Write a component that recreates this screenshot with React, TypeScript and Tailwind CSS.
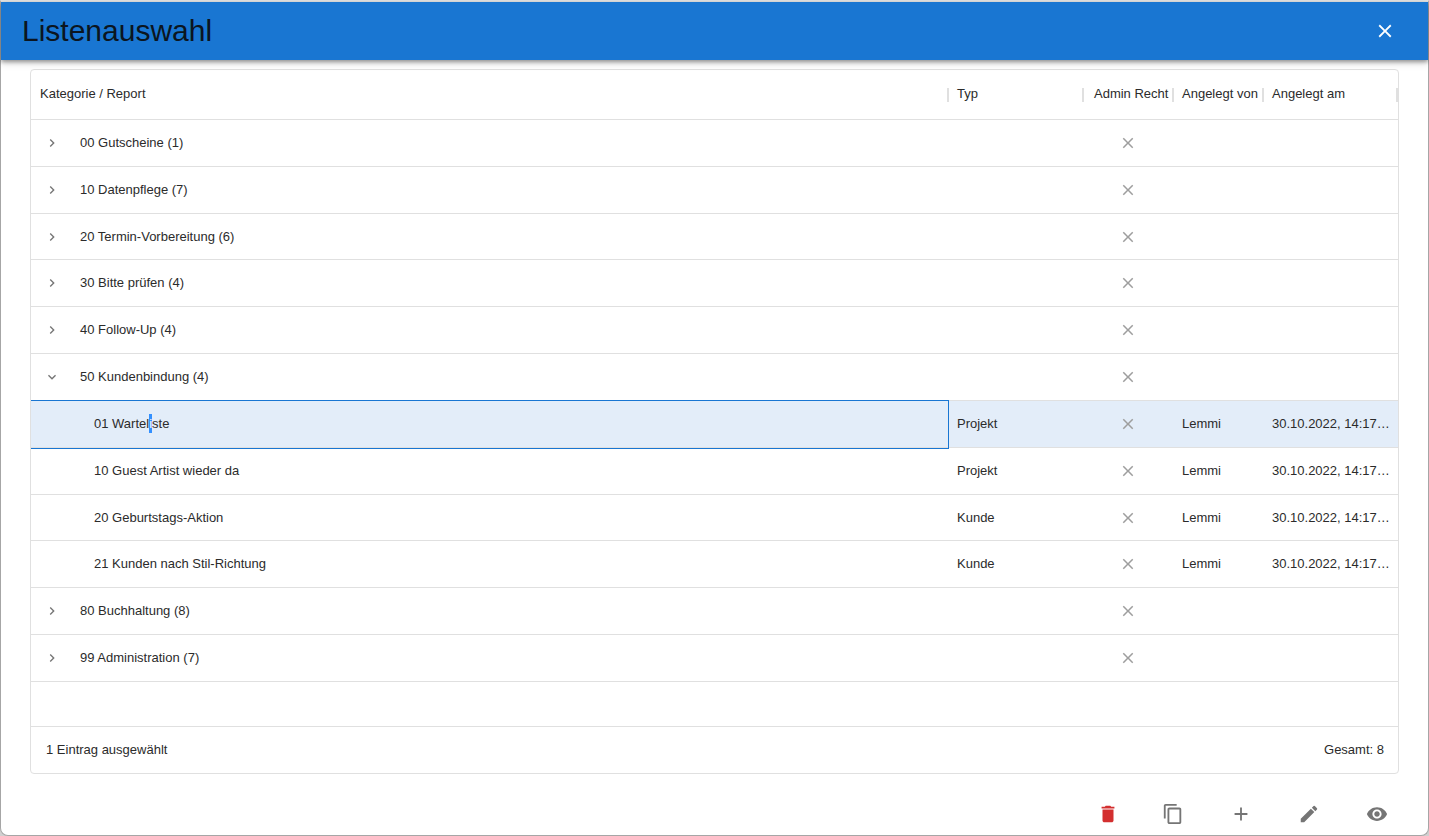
import { ReactNode } from "react";

type Row = { name: string; kind: "open" | "closed" | "leaf"; typ?: string; selected?: boolean };

const rows: Row[] = [
  { name: "00 Gutscheine (1)", kind: "closed" },
  { name: "10 Datenpflege (7)", kind: "closed" },
  { name: "20 Termin-Vorbereitung (6)", kind: "closed" },
  { name: "30 Bitte prüfen (4)", kind: "closed" },
  { name: "40 Follow-Up (4)", kind: "closed" },
  { name: "50 Kundenbindung (4)", kind: "open" },
  { name: "01 Warteliste", kind: "leaf", typ: "Projekt", selected: true },
  { name: "10 Guest Artist wieder da", kind: "leaf", typ: "Projekt" },
  { name: "20 Geburtstags-Aktion", kind: "leaf", typ: "Kunde" },
  { name: "21 Kunden nach Stil-Richtung", kind: "leaf", typ: "Kunde" },
  { name: "80 Buchhaltung (8)", kind: "closed" },
  { name: "99 Administration (7)", kind: "closed" },
];

const paths = {
  close: "M19 6.41 17.59 5 12 10.59 6.41 5 5 6.41 10.59 12 5 17.59 6.41 19 12 13.41 17.59 19 19 17.59 13.41 12z",
  right: "M10 6 8.59 7.41 13.17 12l-4.58 4.59L10 18l6-6z",
  down: "M16.59 8.59 12 13.17 7.41 8.59 6 10l6 6 6-6z",
  trash: "M6 19c0 1.1.9 2 2 2h8c1.1 0 2-.9 2-2V7H6v12zM19 4h-3.5l-1-1h-5l-1 1H5v2h14V4z",
  copy: "M16 1H4c-1.1 0-2 .9-2 2v14h2V3h12V1zm3 4H8c-1.1 0-2 .9-2 2v14c0 1.1.9 2 2 2h11c1.1 0 2-.9 2-2V7c0-1.1-.9-2-2-2zm0 16H8V7h11v14z",
  add: "M19 13h-6v6h-2v-6H5v-2h6V5h2v6h6v2z",
  edit: "M3 17.25V21h3.75L17.81 9.94l-3.75-3.75L3 17.25zM20.71 7.04c.39-.39.39-1.02 0-1.41l-2.34-2.34a.9959.9959 0 0 0-1.41 0l-1.83 1.83 3.75 3.75 1.83-1.83z",
  view: "M12 4.5C7 4.5 2.73 7.61 1 12c1.73 4.39 6 7.5 11 7.5s9.27-3.11 11-7.5c-1.73-4.39-6-7.5-11-7.5zM12 17c-2.76 0-5-2.24-5-5s2.24-5 5-5 5 2.24 5 5-2.24 5-5 5zm0-8c-1.66 0-3 1.34-3 3s1.34 3 3 3 3-1.34 3-3-1.34-3-3-3z",
};

function Icon({ name, className }: { name: keyof typeof paths; className: string }) {
  return (
    <svg viewBox="0 0 24 24" fill="currentColor" aria-hidden="true" className={className}>
      <path d={paths[name]} />
    </svg>
  );
}

function Head({ children, className = "px-2" }: { children: ReactNode; className?: string }) {
  return (
    <th scope="col" className="relative h-[50px] border-b border-[#e0e0e0] p-0 pb-0.5 text-left font-normal whitespace-nowrap">
      <div className={className}>{children}</div>
      <span className="absolute top-1/2 right-0 h-[14px] w-[2px] -translate-y-1/2 bg-[#e0e0e0]" />
    </th>
  );
}

const cell = "border-b border-[#e0e0e0] px-2 py-0";

function ReportRow({ row }: { row: Row }) {
  return (
    <tr className={row.selected ? "bg-[#e3edf9]" : ""} aria-selected={row.selected}>
      <td className={row.selected ? "relative border-b border-[#e0e0e0] p-0" : "border-b border-[#e0e0e0] p-0"}>
        {row.kind === "leaf" ? (
          <div className="pl-[63px]">
            {row.selected ? (
              <>
                01 Wartel<mark className="bg-[#3390ff] py-0.5 text-white">i</mark>ste
              </>
            ) : (
              row.name
            )}
          </div>
        ) : (
          <div className="flex items-center gap-5 pl-[13px]">
            <button type="button" aria-label={row.name} className="text-[#757575]">
              <Icon name={row.kind === "open" ? "down" : "right"} className="size-4" />
            </button>
            <div>{row.name}</div>
          </div>
        )}
        {row.selected && (
          <div className="pointer-events-none absolute inset-x-0 -top-px -bottom-[2px] z-10 border border-l-0 border-[#1976d2]" />
        )}
      </td>
      <td className={cell}>{row.typ}</td>
      <td className="border-b border-[#e0e0e0] py-0 pr-[10px] pl-2">
        <Icon name="close" className="mx-auto size-[18px] text-[#9e9e9e]" />
      </td>
      <td className={cell}>{row.typ && "Lemmi"}</td>
      <td className="border-b border-[#e0e0e0] py-0 pl-2 whitespace-nowrap">{row.typ && "30.10.2022, 14:17…"}</td>
    </tr>
  );
}

function Action({ label, icon, className = "" }: { label: string; icon: keyof typeof paths; className?: string }) {
  return (
    <button type="button" aria-label={label} className={className}>
      <Icon name={icon} className="size-[22px]" />
    </button>
  );
}

export default function App() {
  return (
    <div className="min-h-screen bg-[#d0d0d0] font-['Liberation_Sans',Arial,sans-serif] text-[13px] leading-5 text-[#2b2b2b]">
      <main className="flex min-h-screen flex-col rounded-b-lg border border-t-2 border-[#a6a6a6] border-t-[#e4e4e4] bg-white">
        <header className="relative flex h-[58px] items-center justify-between bg-[#1976d2] pr-8 pl-[21px] shadow-[0_2px_4px_rgba(0,0,0,0.35),0_3px_8px_rgba(0,0,0,0.15)]">
          <h1 className="text-[30px] leading-9 text-[#0b1520]">Listenauswahl</h1>
          <button type="button" aria-label="Schließen" className="text-white">
            <Icon name="close" className="size-[22px]" />
          </button>
        </header>
        <section className="mx-[29px] mt-[9px] flex flex-col rounded border border-[#e0e0e0]">
          <table className="h-[612px] w-full table-fixed border-separate border-spacing-0">
            <colgroup>
              <col />
              <col className="w-[135px]" />
              <col className="w-[90px]" />
              <col className="w-[90px]" />
              <col className="w-[134px]" />
            </colgroup>
            <thead>
              <tr>
                <Head className="px-[9px]">Kategorie / Report</Head>
                <Head>Typ</Head>
                <Head className="pl-[10px]">Admin Recht</Head>
                <Head>Angelegt von</Head>
                <Head>Angelegt am</Head>
              </tr>
            </thead>
            <tbody>
              {rows.map((row) => (
                <ReportRow key={row.name} row={row} />
              ))}
            </tbody>
          </table>
          <footer className="mt-11 flex h-[47px] items-center justify-between border-t border-[#e0e0e0] pr-[14px] pl-[15px]">
            <span>1 Eintrag ausgewählt</span>
            <span>Gesamt: 8</span>
          </footer>
        </section>
        <div className="mt-auto flex h-[43px] items-center justify-end gap-[43px] pr-10 text-[#757575]">
          <Action label="Löschen" icon="trash" className="text-[#d32f2f]" />
          <div className="flex items-center gap-[46px]">
            <Action label="Kopieren" icon="copy" />
            <Action label="Hinzufügen" icon="add" />
            <Action label="Bearbeiten" icon="edit" />
            <Action label="Anzeigen" icon="view" />
          </div>
        </div>
      </main>
    </div>
  );
}
